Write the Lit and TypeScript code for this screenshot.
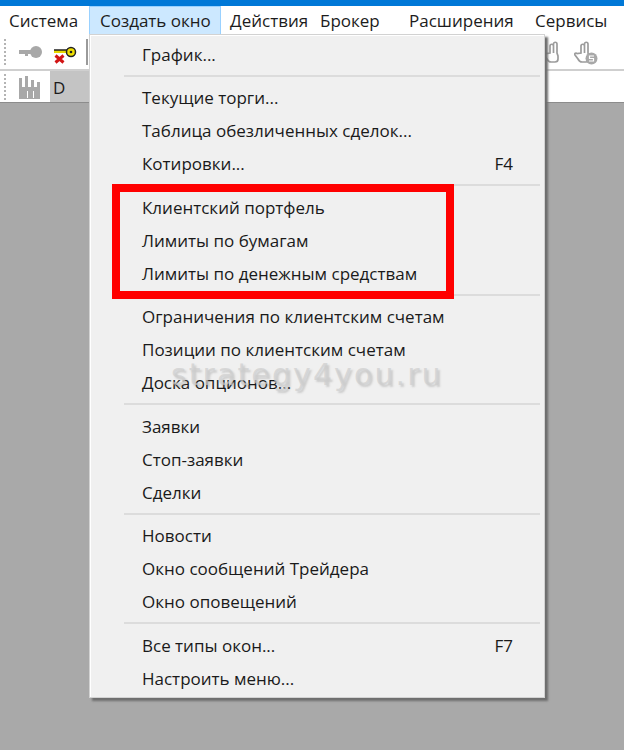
import { LitElement, html, css, svg } from "lit";
import { customElement } from "lit/decorators.js";

type Row = { t: string; k?: string };
const groups: Row[][] = [
  [{ t: "График..." }],
  [{ t: "Текущие торги..." }, { t: "Таблица обезличенных сделок..." }, { t: "Котировки...", k: "F4" }],
  [{ t: "Клиентский портфель" }, { t: "Лимиты по бумагам" }, { t: "Лимиты по денежным средствам" }],
  [{ t: "Ограничения по клиентским счетам" }, { t: "Позиции по клиентским счетам" }, { t: "Доска опционов..." }],
  [{ t: "Заявки" }, { t: "Стоп-заявки" }, { t: "Сделки" }],
  [{ t: "Новости" }, { t: "Окно сообщений Трейдера" }, { t: "Окно оповещений" }],
  [{ t: "Все типы окон...", k: "F7" }, { t: "Настроить меню..." }],
];
const menus = ["Система", "Создать окно", "Действия", "Брокер", "Расширения", "Сервисы"];

const grip = svg`<svg class="grip" width="4" height="28" viewBox="0 0 4 28">
  ${[1, 5, 9, 13, 17, 21, 25].map((y) => svg`<rect x="1" y="${y}" width="2" height="2" fill="#b4b4b4"/>`)}
</svg>`;

const hand = (s: boolean) => svg`<svg width="24" height="24" viewBox="0 0 24 24" fill="#fff" stroke="#9c9c9c" stroke-width="1.700">
  <path d="M7 12V5a1.700 1.700 0 0 1 3.500 0V3a1.700 1.700 0 0 1 3.500 0v9l1 3v3a3 3 0 0 1-3 3H8c-2 0-3-1-4-3l-3-4c-.8-1.500 1-2.500 2-1.500z"/>
  <path d="M10.500 5v7" fill="none"/>
  ${s ? svg`<circle cx="17.500" cy="17.500" r="6" fill="#a8a8a8" stroke="none"/><path d="M20 15h-4.500v2.500h4v2.500h-4.500" fill="none" stroke="#fff" stroke-width="1.200"/>` : ""}
</svg>`;

@customElement("app-root")
export class AppRoot extends LitElement {
  static styles = css`
    :host { display: block; width: 624px; height: 750px; position: relative; overflow: hidden; background: #a9a9a9; font-family: "Open Sans", "Noto Sans", sans-serif; color: #1c1c1c; }
    .frame { display: flex; flex-direction: column; height: 103px; }
    .title { height: 6px; background: #0078d7; }
    .bar { display: grid; grid-template-columns: 89px 132px 90px 89px 126px auto; height: 29px; background: #fff; font-size: 17px; }
    .bar span { padding-left: 9px; height: 29px; line-height: 29px; white-space: nowrap; box-sizing: border-box; }
    .bar .m1 { background: #cce8ff; box-shadow: inset 0 0 0 1px #99d1ff; padding-left: 11px; }
    .tool { display: flex; align-items: center; height: 36px; background: #fff; border-bottom: 2px solid #cfcfcf; box-sizing: border-box; padding-left: 3px; gap: 10px; }
    .tool2 { background: #fff; display: flex; align-items: center; padding-left: 3px; height: 32px; border-bottom: 1px solid #8c8c8c; box-sizing: border-box; }
    .grip { flex: none; }
    .key { margin-left: 2px; }
    .vsep { width: 2px; height: 26px; background: #9a9a9a; margin-left: -1px; }
    .chart { margin-left: 12px; }
    .d { width: 50px; height: 31px; background: #c4c4c4; font-size: 17px; padding-top: 2px; line-height: 29px; padding-left: 3px; box-sizing: border-box; margin-left: 6px; }
    .hands { position: absolute; left: 543px; top: 41px; display: flex; gap: 7px; }
    .menu { position: absolute; left: 89px; top: 34px; width: 456px; height: 664px; box-sizing: border-box; background: #f0f0f0; border: 1px solid #d2d2d2; box-shadow: 1px 1px 0 #fff inset, 3px 3px 2px #6e6e6e; font-size: 17px; padding-top: 2.700px; }
    .group { display: flex; flex-direction: column; }
    .row { height: 33px; display: flex; justify-content: space-between; align-items: center; padding: 0 31px 0 52px; white-space: nowrap; color: #1a1a1a; }
    .sep { height: 2px; background: #dcdcdc; margin: 4px 4px 4.500px 34px; }
    .red { position: absolute; left: 112px; top: 184px; width: 342px; height: 115px; box-sizing: border-box; border: 8px solid #ff0000; }
    .mark { position: absolute; left: 171px; top: 355px; font-size: 30px; letter-spacing: 2.100px; line-height: 40px; color: rgba(205,205,205,0.7); text-shadow: 2px 2px 2px rgba(120,120,120,.3); font-family: "DejaVu Sans", sans-serif; white-space: nowrap; }
  `;

  render() {
    return html`
      <div class="frame">
        <div class="title"></div>
        <div class="bar">
          ${menus.map((m, i) => html`<span class="m${i}">${m}</span>`)}
        </div>
        <div class="tool">
          ${grip}
          <svg class="key" width="24" height="16" viewBox="0 0 24 16">
            <path d="M0 6h13v4H9v2H6v-2H0z" fill="#a8a8a8"/><circle cx="17" cy="8" r="6" fill="#a8a8a8"/>
          </svg>
          <svg width="24" height="24" viewBox="0 0 24 24">
            <path d="M1 10h12v3H1z" fill="#e8d800"/><path d="M1 10h13" stroke="#222" stroke-width="1.500"/>
            <circle cx="18" cy="12" r="4.500" fill="#f0e000" stroke="#222" stroke-width="1.500"/><circle cx="18" cy="12" r="1.300" fill="#222"/>
            <path d="M2.500 15.500l8 7M10.500 15.500l-8 7" stroke="#d21414" stroke-width="3"/>
          </svg>
          <div class="vsep"></div>
        </div>
        <div class="tool2">
          ${grip}
          <svg class="chart" width="25" height="26" viewBox="0 0 25 26">
            <path d="M0 25V4h3v9h3V2h3v11h3V6h3v7h3V8h3v17z" fill="#a8a8a8"/>
            <path d="M8 24v-7h1v7zM14 24v-7h1v7z" fill="#fff"/>
          </svg>
          <div class="d">D</div>
        </div>
      </div>
      <div class="hands">${hand(false)}${hand(true)}</div>
      <div class="menu">
        ${groups.map((g, i) => html`
          ${i ? html`<div class="sep"></div>` : ""}
          <div class="group">
            ${g.map((r) => html`<div class="row"><span>${r.t}</span>${r.k ? html`<span>${r.k}</span>` : ""}</div>`)}
          </div>`)}
      </div>
      <div class="red"></div>
      <div class="mark">strategy4you.ru</div>
    `;
  }
}
